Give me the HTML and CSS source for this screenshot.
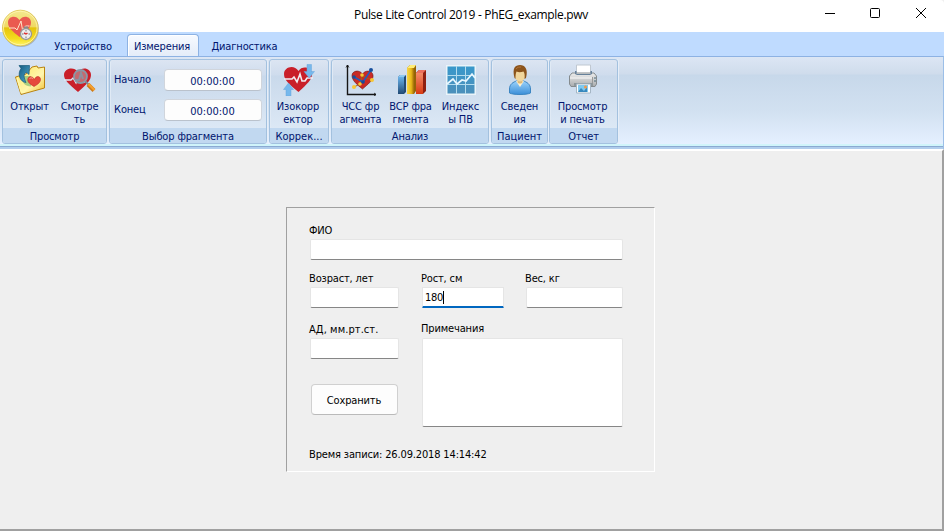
FILE: index.html
```html
<!DOCTYPE html>
<html lang="ru">
<head>
<meta charset="utf-8">
<title>Pulse Lite Control 2019 - PhEG_example.pwv</title>
<link rel="stylesheet" href="styles.css">
</head>
<body>
<div class="window">
  <header class="titlebar">
    <h1 class="title">Pulse Lite Control 2019 - PhEG_example.pwv</h1>
    <svg class="controls" width="110" height="24" viewBox="0 0 110 24" fill="none" stroke="#000" stroke-width="1">
      <path d="M5 9.500h10"/><rect x="50.500" y="4.500" width="9" height="9" rx="1"/><path d="M96 4l10 10M106 4l-10 10"/>
    </svg>
  </header>
  <svg class="orb" width="40" height="40" viewBox="0 0 40 40">
    <defs>
      <linearGradient id="gold" x1="0" y1="0" x2="0" y2="1"><stop offset="0" stop-color="#f4e890"/><stop offset=".46" stop-color="#efd964"/><stop offset=".5" stop-color="#e5c40c"/><stop offset=".8" stop-color="#f4dc20"/><stop offset="1" stop-color="#fff56a"/></linearGradient>
    </defs>
    <circle cx="21" cy="21" r="18" fill="#8d8f93" opacity=".55"/>
    <circle cx="20.300" cy="20" r="17.800" fill="url(#gold)" stroke="#dcc045" stroke-width=".8"/>
    <circle cx="20.300" cy="20" r="16.800" fill="none" stroke="#fff6b5" stroke-width=".8"/>
    <path d="M19.500 29C12 23 8 19.500 8 14.500 8 8 16 6.500 19.500 12 23 6.500 31 8 31 14.500 31 19.500 27 23 19.500 29z" fill="#ea5a50"/>
    <path d="M9 20h6l2 2 4-9 1.500 9 3-4h4" fill="none" stroke="#ffe3c8"/>
    <path d="M24 19.500h4" stroke="#888" stroke-width="2"/>
    <circle cx="26" cy="26" r="5.500" fill="#eee" stroke="#969696" stroke-width="1.300"/>
    <path d="M26 22v1.500M26 28.500V30M22 26h1.500M28.500 26H30" stroke="#777"/>
    <path d="M24 25l2 1 1.500-1" fill="none" stroke="#d33" stroke-width="1.500"/>
  </svg>
  <nav class="tabs">
    <span class="tab t1">Устройство</span><span class="tab active">Измерения</span><span class="tab t3">Диагностика</span>
  </nav>
  <section class="ribbon">
    <div class="group g1">
      <div class="tools">
        <button class="tool">
          <svg width="32" height="32" viewBox="0 0 32 32">
            <defs><linearGradient id="folder" x1="0" y1="0" x2="1" y2="1"><stop offset="0" stop-color="#ffe45e"/><stop offset=".6" stop-color="#fff6ae"/><stop offset="1" stop-color="#f0bb2b"/></linearGradient>
            <linearGradient id="arrow" x1="0" y1="0" x2="1" y2="1"><stop offset="0" stop-color="#155b80"/><stop offset="1" stop-color="#4fa9d0"/></linearGradient></defs>
            <path d="M1.500 13L12 10l6-7 5-1 1 2 6.500-1v21L7 30.500z" fill="url(#folder)" stroke="#b98311"/>
            <path d="M7.500 29L3 14" stroke="#fff7a8" stroke-width="1.500"/>
            <path d="M8 12c0 7 3 10.500 9 10.500V12z" fill="#8fc175" opacity=".75"/>
            <path d="M7 4.500L5 1.500h10.500l-.5 9-3-2.500c-3 3-2 6 0 10.500C6 18 3 10 7 4.500z" fill="url(#arrow)" stroke="#17597a" stroke-width=".7"/>
            <path d="M20 22.500c-5-3-7-5-6-8 1-3 5-2 6.500 1 1-4 6-4 6 0 0 3-3 5-6.500 7z" fill="#e5483c" stroke="#bd2b22" stroke-width=".6"/>
            <path d="M15.500 15c1-2 3-1 3.500 0" fill="none" stroke="#ffa49b"/>
          </svg><span>Открыт<br>ь</span>
        </button>
        <button class="tool">
          <svg width="32" height="32" viewBox="0 0 32 32">
            <path d="M14 28C5 20 0 16 0 11 0 4 10 2 14 8 18 2 27 4 27 11 27 16 23 20 14 28z" fill="#c91f29"/>
            <path d="M0 16h7l2-2 3 5 3-9 2 8h4" fill="none" stroke="#dfe9f5" stroke-width="1.300"/>
            <circle cx="16.500" cy="12.500" r="6.500" fill="#c26b70" stroke="#8999a7" stroke-width="1.800"/>
            <path d="M12 16l3 0 2-7 2 6" fill="none" stroke="#8d91a0" stroke-width="2"/>
            <path d="M21.500 17.500l3 3" stroke="#7d8b95" stroke-width="2"/><path d="M24 20.500l6 6" stroke="#cf7c19" stroke-width="4"/><path d="M24.500 20l6 6" stroke="#f6a02f" stroke-width="2.200"/>
          </svg><span>Смотре<br>ть</span>
        </button>
      </div>
      <div class="caption">Просмотр</div>
    </div>
    <div class="group g2">
      <div class="times">
        <label>Начало</label><span class="time">00:00:00</span>
        <label>Конец</label><span class="time">00:00:00</span>
      </div>
      <div class="caption">Выбор фрагмента</div>
    </div>
    <div class="group g3">
      <div class="tools">
        <button class="tool">
          <svg width="32" height="32" viewBox="0 0 32 32">
            <path d="M15.500 28C6 20 1 16 1 10 1 3 11 0 15.500 7 19 1 29 3 29 10 29 16 24 20 15.500 28z" fill="#c91f29"/>
            <path d="M1 15h8l2-2 3 5 3-8 2 7h3l2-3h6" fill="none" stroke="#f1edf2" stroke-width="1.600"/>
            <path d="M24 .5h4.500v7h3L26.200 14 21 7.500h3zM3 32h5v-6.500h2.500L5.500 19 .5 25.500H3z" fill="#76b8ec" stroke="#68a6dc" stroke-width=".5"/>
          </svg><span>Изокорр<br>ектор</span>
        </button>
      </div>
      <div class="caption">Коррек...</div>
    </div>
    <div class="group g4">
      <div class="tools">
        <button class="tool">
          <svg width="32" height="32" viewBox="0 0 32 32">
            <path d="M2.500 1v29.500H31" fill="none" stroke="#161616" stroke-width="1.400"/><path d="M1 3.500l1.500-2.500L4 3.500M29 29l2 1.500-2 1.500" fill="none" stroke="#161616" stroke-width=".8"/>
            <path d="M17.500 25C11 20 7 16 7 11.500 7 7 14 5 17.500 10 20 6 27 6 28 11 29 16 22 21 17.500 25z" fill="#c92b26" stroke="#6f1718" stroke-width=".6"/>
            <path d="M9 23L15 20 17 12 27 16" fill="none" stroke="#9d6915"/><path d="M9 13l9 5 8-12" fill="none" stroke="#235cbd" stroke-width="1.600"/>
            <g fill="#f7c735"><circle cx="9" cy="23" r="2"/><circle cx="15" cy="20" r="1.800"/><circle cx="17" cy="11" r="1.800"/><circle cx="27" cy="16" r="2"/></g><g fill="#164e9c"><circle cx="9" cy="13" r="1.800"/><circle cx="18" cy="18" r="1.800"/><circle cx="26" cy="6" r="2"/></g>
          </svg><span>ЧСС фр<br>агмента</span>
        </button>
        <button class="tool">
          <svg width="32" height="32" viewBox="0 0 32 32">
            <defs><linearGradient id="blueBar" x2="0" y2="1"><stop stop-color="#69b1e8"/><stop offset="1" stop-color="#214a75"/></linearGradient><linearGradient id="goldBar"><stop stop-color="#f6d546"/><stop offset=".6" stop-color="#e9b81a"/><stop offset="1" stop-color="#9e6a08"/></linearGradient><linearGradient id="redBar" x2="0" y2="1"><stop stop-color="#f38b67"/><stop offset="1" stop-color="#d83a12"/></linearGradient></defs>
            <path d="M3 13l2-2h6v17l-2 2H3z" fill="#254a72"/><path d="M3 13h6v17H3z" fill="url(#blueBar)"/><path d="M3 13l2-2h6l-2 2z" fill="#8fc9f2"/>
            <path d="M12 4l3-3h6v26l-2 3h-7z" fill="#946407"/><path d="M12 4h7v26h-7z" fill="url(#goldBar)"/><path d="M12 4l3-3h6l-2 3z" fill="#ffed75"/>
            <path d="M21 9l3-3h7v21l-3 3h-7z" fill="#8e2010"/><path d="M21 9h7v21h-7z" fill="url(#redBar)"/><path d="M21 9l3-3h7l-3 3z" fill="#ec705d"/>
          </svg><span>ВСР фра<br>гмента</span>
        </button>
        <button class="tool">
          <svg width="32" height="32" viewBox="0 0 32 32">
            <defs><linearGradient id="chartFill" x2="0" y2="1"><stop stop-color="#3998cb"/><stop offset="1" stop-color="#4c90bb"/></linearGradient></defs>
            <path d="M1 1h30v30H1z" fill="#eaf4f9"/><path d="M2.500 2.500h27v27h-27z" fill="url(#chartFill)"/>
            <path d="M11.500 2v28M20.500 2v28M2 11.500h28M2 20.500h28" stroke="#b3dcee"/>
            <path d="M2 20l6-5 4 5 5-4 4 1 6-7 3 4" fill="none" stroke="#e7f7ff" stroke-width="1.700"/>
          </svg><span>Индекс<br>ы ПВ</span>
        </button>
      </div>
      <div class="caption">Анализ</div>
    </div>
    <div class="group g5">
      <div class="tools">
        <button class="tool">
          <svg width="32" height="32" viewBox="0 0 32 32">
            <defs><linearGradient id="shirt" x2="0" y2="1"><stop stop-color="#9bd2fb"/><stop offset="1" stop-color="#3c8fd8"/></linearGradient></defs>
            <path d="M5.500 29v-4c0-5 4-7 7-8h7c3 1 7 3 7 8v4c-4 2-17 2-21 0z" fill="url(#shirt)" stroke="#3d86c2"/>
            <path d="M12 17h8l-4 6z" fill="#fff1cf"/><path d="M13.500 14h5v4c0 2-5 2-5 0z" fill="#ddb878"/>
            <ellipse cx="16" cy="11" rx="5.500" ry="6.500" fill="#f1d69c"/><path d="M10.500 14C8 4 11 1 16 1s8.500 4 6 13l-1.500 1c.5-4 0-6-1-7.500-3 1-5 1-7 0-1 2-1 5-1 7.500z" fill="#8c541c"/><path d="M12 5c1-2 4-2 5-2" fill="none" stroke="#b57535"/>
          </svg><span>Сведен<br>ия</span>
        </button>
      </div>
      <div class="caption">Пациент</div>
    </div>
    <div class="group g6">
      <div class="tools">
        <button class="tool">
          <svg width="32" height="32" viewBox="0 0 32 32">
            <defs><linearGradient id="printer" x2="0" y2="1"><stop stop-color="#eee"/><stop offset="1" stop-color="#a8abad"/></linearGradient></defs>
            <path d="M9.500 1h14v12h-14z" fill="#fff" stroke="#c0c8d1"/>
            <path d="M2.500 12L5 9h22l2.500 3v8L28 22.500H4L2.500 20z" fill="url(#printer)" stroke="#858b8e"/>
            <path d="M8 10V7h1.500v3h14V7H25v3l-2 1H10z" fill="#66819a"/><path d="M3 14h22" stroke="#f9f9f9"/><path d="M25.500 13v8" stroke="#999"/><path d="M27 14h2M27 17h2" stroke="#466978"/>
            <path d="M7 19h19v3H7z" fill="#8d979b"/><path d="M9.500 20h14v9h-14z" fill="#fff" stroke="#a5b6c4"/><path d="M11 21h10v7H11z" fill="#80c9ef"/><path d="M11 28l3-4 3 3 3-4v5z" fill="#3888bd"/><circle cx="18.500" cy="23" r="1.500" fill="#f2994b"/>
          </svg><span>Просмотр<br>и печать</span>
        </button>
      </div>
      <div class="caption">Отчет</div>
    </div>
  </section>
  <main class="workspace">
    <form class="panel">
      <div class="field"><label>ФИО</label><input type="text"></div>
      <div class="row">
        <div class="field"><label>Возраст, лет</label><input type="text"></div>
        <div class="field"><label>Рост, см</label><div class="focused">180<i class="caret"></i></div></div>
        <div class="field"><label>Вес, кг</label><input type="text"></div>
      </div>
      <div class="row notes">
        <div class="field left"><label class="pressure">АД, мм.рт.ст.</label><input type="text"><button type="button" class="save">Сохранить</button></div>
        <div class="field"><label>Примечания</label><textarea></textarea></div>
      </div>
      <p class="record">Время записи: 26.09.2018 14:14:42</p>
    </form>
  </main>
</div>
</body>
</html>
```
FILE: styles.css
```css
* { box-sizing: border-box; }
body { margin: 0; background: #efefef; overflow: hidden; }
.window { position: relative; display: flex; flex-direction: column; width: 944px; height: 531px; font: 11px/14px "DejaVu Sans Condensed", "DejaVu Sans", sans-serif; font-stretch: condensed; letter-spacing: -.15px; color: #000; }
.titlebar { display: flex; height: 32px; background: #fff; padding-left: 354px; justify-content: space-between; border-top-right-radius: 4px; }
.title { margin: 6px 0 0; font: 12px/18px "Open Sans", sans-serif; letter-spacing: -.33px; white-space: nowrap; }
.controls { margin: 4px 14px 0 0; }
.orb { position: absolute; left: 0; top: 8px; }
.tabs { display: flex; height: 24px; padding: 2px 0 0 40px; background: #bfdbff; color: #00156e; }
.tab { width: 87px; height: 23px; padding-top: 6px; text-align: center; white-space: nowrap; }
.t1 { padding-right: 1px; }
.tab.active { width: 72px; border: 1px solid #8db2e3; border-bottom: 0; border-radius: 4px 4px 0 0; background: linear-gradient(#f7faff, #e2ebf8); padding: 5px 2px 0 0; box-shadow: inset 1px 1px #fff; height: 24px; }
.t3 { width: 91px; }
.ribbon { display: flex; height: 93px; padding: 2px 0 0 2px; border-top: 1px solid #8db2e3; border-right: 1px solid #9cbfe8; background: linear-gradient(#dce6f4 0, #cfdcec 17px, #c7d8ea 18px, #d2e1f1 55px, #e5f0ff 87px, #d0f4fa 87px, #d0f4fa 89px, #8aaad2 89px, #8aaad2 90px, #b0cdec 90px); color: #00156e; }
.group { height: 85px; flex: none; margin-right: 2px; border: 1px solid #a3c1df; border-radius: 3px; box-shadow: inset 1px 0 #e0eaf5, 1px 0 #e6eef8; background: linear-gradient(#dce5f2 0, #cfdced 15px, #c9d9eb 16px, #dce8f5 68px); display: flex; flex-direction: column; overflow: hidden; }
.g1 { width: 105px; }
.g2 { width: 158px; }
.g3 { width: 60px; }
.g4 { width: 158px; }
.g5 { width: 57px; margin-right: 1px; }
.g6 { width: 69px; }
.tools { height: 68px; display: flex; justify-content: center; padding: 4px 0 0; }
.g3 .tools, .g6 .tools { padding-right: 2px; }
.g4 .tools { padding-left: 1px; }
.tool { width: 50px; flex: none; border: 0; background: none; padding: 0; font: inherit; line-height: 13px; letter-spacing: inherit; color: inherit; display: flex; flex-direction: column; align-items: center; gap: 4px; white-space: nowrap; }
.tool svg { flex: none; }
.g3 .tool svg { margin-left: 2px; }
.caption { height: 15px; line-height: 17px; text-align: center; background: #c1d8f0; white-space: nowrap; }
.g3 .caption, .g5 .caption { letter-spacing: 0; }
.times { height: 68px; display: grid; grid-template: 22px 22px / 50px 98px; row-gap: 8px; padding: 9px 0 0 4px; align-items: center; }
.times label { padding-bottom: 1px; }
.time { height: 22px; padding-right: 1px; border: 1px solid #d0d5dc; border-bottom-color: #bac2cc; border-radius: 4px; background: #fdfdfd; text-align: center; line-height: 23px; letter-spacing: 0; }
.workspace { flex: 1; display: flex; border-top: 2px solid #fff; border-right: 2px solid #a0a0a0; border-bottom: 2px solid #a0a0a0; background: #efefef; padding: 56px 0 0 286px; }
.panel { width: 369px; height: 265px; border: 1px solid; border-color: #a0a0a0 #fff #fff #a0a0a0; padding: 16px 0 0 22px; }
.field { display: flex; flex-direction: column; align-items: flex-start; gap: 1px; }
.field label { white-space: nowrap; }
input, textarea, .focused { display: block; width: 313px; height: 21px; margin: 0 0 0 1px; padding: 0; border: 1px solid #e5e5e5; border-bottom-color: #868686; border-radius: 2px; background: #fff; resize: none; outline: 0; }
.row { display: grid; grid-template-columns: 112px 104px 98px; margin-top: 12px; }
.row input { width: 89px; }
.row .field:nth-child(3) input { width: 97px; }
.focused { display: flex; width: 82px; padding: 1px 0 0 2px; align-items: center; border-bottom: 2px solid #0067c0; border-radius: 1px; letter-spacing: -.3px; }
.caret { width: 1px; height: 13px; margin-bottom: 1px; background: #000; }
.notes { grid-template-columns: 112px 202px; margin-top: 14px; }
.notes .field { gap: 2px; }
.notes textarea { width: 201px; height: 89px; }
.pressure { position: relative; top: 1px; letter-spacing: .08px; }
.save { width: 87px; height: 31px; margin: 23px 0 0 2px; border: 1px solid #d0d0d0; border-bottom-color: #bababa; border-radius: 4px; background: #fdfdfd; padding: 2px 1px 0 0; font: inherit; letter-spacing: inherit; color: #000; }
.record { margin: 21px 0 0; letter-spacing: -.15px; }
```
